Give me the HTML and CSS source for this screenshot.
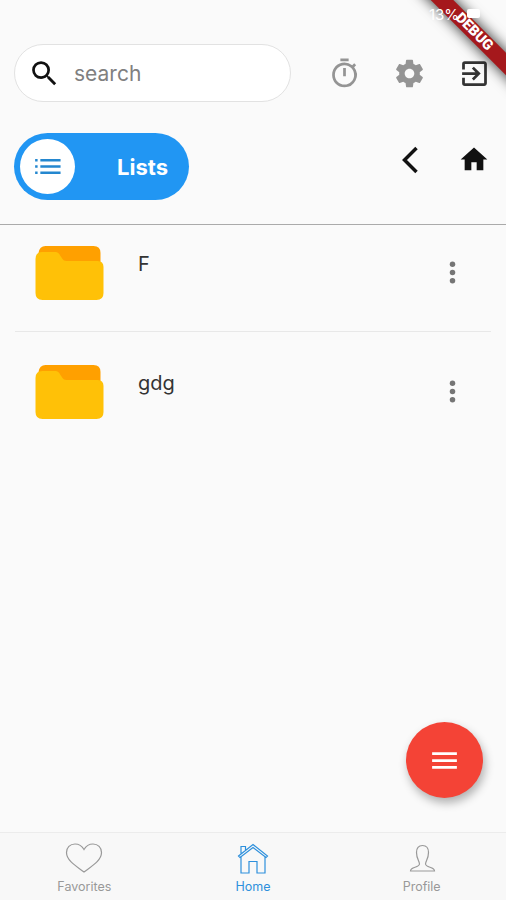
FILE: index.html
```html
<!DOCTYPE html>
<html lang="en">
<head>
  <meta charset="UTF-8">
  <title>Lists</title>
  <link rel="stylesheet" href="styles.css">
</head>
<body>
  <div class="status"><span>13%</span><i class="battery"></i></div>
  <div class="debug"><span>DEBUG</span></div>

  <header class="top">
    <div class="search">
      <svg class="icon" viewBox="0 0 24 24"><path d="M15.5 14h-.79l-.28-.27A6.471 6.471 0 0 0 16 9.5 6.5 6.5 0 1 0 9.5 16c1.61 0 3.09-.59 4.23-1.57l.27.28v.79l5 4.99L20.49 19l-4.99-5zm-6 0C7.01 14 5 11.99 5 9.5S7.01 5 9.5 5 14 7.01 14 9.5 11.99 14 9.5 14z"/></svg>
      <span>search</span>
    </div>
    <svg class="icon grey" viewBox="0 0 24 24"><path d="M15 1H9v2h6V1zm-4 13h2V8h-2v6zm8.03-6.61l1.42-1.42c-.43-.51-.9-.99-1.41-1.41l-1.42 1.42A8.962 8.962 0 0 0 12 4c-4.97 0-9 4.03-9 9s4.02 9 9 9a8.994 8.994 0 0 0 7.03-14.61zM12 20c-3.87 0-7-3.13-7-7s3.13-7 7-7 7 3.13 7 7-3.13 7-7 7z"/></svg>
    <svg class="icon grey" viewBox="0 0 24 24"><path d="M19.43 12.98c.04-.32.07-.64.07-.98s-.03-.66-.07-.98l2.11-1.65c.19-.15.24-.42.12-.64l-2-3.46c-.12-.22-.39-.3-.61-.22l-2.49 1c-.52-.4-1.08-.73-1.69-.98l-.38-2.65A.488.488 0 0 0 14 2h-4c-.25 0-.46.18-.49.42l-.38 2.65c-.61.25-1.17.59-1.69.98l-2.49-1c-.23-.09-.49 0-.61.22l-2 3.46c-.13.22-.07.49.12.64l2.11 1.65c-.04.32-.07.65-.07.98s.03.66.07.98l-2.11 1.65c-.19.15-.24.42-.12.64l2 3.46c.12.22.39.3.61.22l2.49-1c.52.4 1.08.73 1.69.98l.38 2.65c.03.24.24.42.49.42h4c.25 0 .46-.18.49-.42l.38-2.65c.61-.25 1.17-.59 1.69-.98l2.49 1c.23.09.49 0 .61-.22l2-3.46c.12-.22.07-.49-.12-.64l-2.11-1.65zM12 15.5c-1.93 0-3.5-1.57-3.5-3.5s1.57-3.5 3.5-3.5 3.5 1.57 3.5 3.5-1.57 3.5-3.5 3.5z"/></svg>
    <svg class="icon dark" viewBox="0 0 24 24"><path d="M10.09 15.59L11.5 17l5-5-5-5-1.41 1.41L12.67 11H3v2h9.67l-2.58 2.59zM19 3H5a2 2 0 0 0-2 2v4h2V5h14v14H5v-4H3v4a2 2 0 0 0 2 2h14c1.1 0 2-.9 2-2V5c0-1.1-.9-2-2-2z"/></svg>
  </header>

  <div class="bar">
    <div class="switch">
      <div class="knob">
        <svg class="icon" viewBox="0 0 24 24"><path d="M3 6.600h1.800v1.800H3zM3 11.100h1.800v1.800H3zM3 15.600h1.800v1.800H3zM6.800 6.600H21.500v1.800H6.800zM6.800 11.100H21.500v1.800H6.800zM6.800 15.600H21.500v1.800H6.800z"/></svg>
      </div>
      <b>Lists</b>
    </div>
    <svg class="chevron" viewBox="0 0 18 28"><path d="M15.5 2L3.5 14l12 12"/></svg>
    <svg class="icon house" viewBox="0 0 24 24"><path d="M10 20v-6h4v6h5v-8h3L12 3 2 12h3v8z"/></svg>
  </div>

  <main class="list">
    <div class="row">
      <svg class="folder" viewBox="0 0 68 54"><path class="back" d="M10 0h48q7 0 7 7v20H3V7q1-7 7-7z"/><path class="front" d="M7 6h13q3 0 5 4l2 3q1 2 4 2h31q6 0 6 6v26q0 7-7 7H7q-7 0-7-7V13q0-7 7-7z"/></svg>
      <span class="name">F</span>
      <svg class="icon more" viewBox="0 0 24 24"><circle cx="12" cy="6" r="2"/><circle cx="12" cy="12" r="2"/><circle cx="12" cy="18" r="2"/></svg>
    </div>
    <div class="row">
      <svg class="folder" viewBox="0 0 68 54"><path class="back" d="M10 0h48q7 0 7 7v20H3V7q1-7 7-7z"/><path class="front" d="M7 6h13q3 0 5 4l2 3q1 2 4 2h31q6 0 6 6v26q0 7-7 7H7q-7 0-7-7V13q0-7 7-7z"/></svg>
      <span class="name">gdg</span>
      <svg class="icon more" viewBox="0 0 24 24"><circle cx="12" cy="6" r="2"/><circle cx="12" cy="12" r="2"/><circle cx="12" cy="18" r="2"/></svg>
    </div>
  </main>

  <div class="fab">
    <svg class="icon" viewBox="0 0 24 24"><path d="M3 18h18v-2H3v2zm0-5h18v-2H3v2zm0-7v2h18V6H3z"/></svg>
  </div>

  <nav class="tabs">
    <div class="tab">
      <svg viewBox="0 0 40 34"><path d="M20 31C12 25 2.500 19.500 2.500 11.500c0-5 3.500-8.500 8.500-8.500 4 0 7 2 9 5.500C22 5 25 3 29 3c5 0 8.500 3.500 8.500 8.500C37.500 19.500 28 25 20 31z"/></svg>
      <span>Favorites</span>
    </div>
    <div class="tab active">
      <svg viewBox="0 0 40 34"><path d="M5.500 15L20 3.500 34.500 15l-1.500 1.500L20 6.500 7 16.500zM8 13V5.500h4.500v4M8 16v16h8V20.500h8V32h8V16"/></svg>
      <span>Home</span>
    </div>
    <div class="tab">
      <svg viewBox="0 0 40 34"><path d="M8.500 30c0-4.500 8.500-3 9-7 0-3-3-5-3-11.500C14.500 7 16.500 4.500 20.500 4.500s6 2.500 6 7c0 6.500-3 8.500-3 11.500.5 4 9 2.500 9 7z"/></svg>
      <span>Profile</span>
    </div>
  </nav>
</body>
</html>
```

FILE: styles.css
```css
* { box-sizing: border-box; }
body {
  margin: 0; height: 900px; overflow: hidden; position: relative;
  display: flex; flex-direction: column;
  background: #fafafa; color: #333; font-family: Inter, "Liberation Sans", sans-serif;
}
svg { display: block; flex: none; }
.icon { width: 33px; height: 33px; fill: #111; }
.grey { fill: #949494; }
.dark { fill: #333; }

.status {
  height: 44px; flex: none; padding: 6px 26px 0 0;
  display: flex; justify-content: flex-end; gap: 8px;
  position: relative; z-index: 1;
  color: #fff; font-size: 15px; line-height: 18px;
}
.battery { width: 13px; height: 9px; margin-top: 3px; background: #fff; border-radius: 2px; }

/* corner ribbon */
.debug {
  position: absolute; top: 0; right: 0; width: 110px; height: 110px; overflow: hidden;
  pointer-events: none;
}
.debug span {
  position: absolute; left: 8px; top: 24px; width: 140px; height: 16px;
  transform: rotate(45deg);
  background: #a5181c; color: #fff; text-align: center;
  font: 900 14.5px/16px Roboto, sans-serif;
  box-shadow: 0 0 13px 1px rgba(0, 0, 0, .75);
}

.top { display: flex; align-items: center; padding: 0 15px 0 14px; height: 58px; flex: none; }
.search {
  width: 277px; height: 58px; margin-right: 37px; padding-left: 13px;
  display: flex; align-items: center;
  background: #fff; border: 1px solid #e2e2e2; border-radius: 29px;
  color: #808080; font-size: 21px;
}
.search span { margin-left: 13px; }
.top .grey { margin-right: 32px; }

.bar {
  display: flex; align-items: flex-start; flex: none;
  height: 123px; padding: 31px 16px 0 14px; border-bottom: 1px solid #aaa;
}
.switch {
  width: 175px; height: 67px; margin-right: 212px; padding: 0 21px 0 6px;
  display: flex; align-items: center; justify-content: space-between;
  background: #2196f3; border-radius: 34px; color: #fff; font-size: 22px;
}
.knob {
  width: 55px; height: 55px; border-radius: 50%; background: #fff;
  display: flex; align-items: center; justify-content: center;
}
.knob .icon { fill: #2487cf; }
.chevron { width: 18px; height: 28px; margin-top: 13px; fill: none; stroke: #111; stroke-width: 3.5; }
.house { width: 32px; margin: 10px 0 0 39px; }

.list { flex: 1; padding: 0 15px; }
.row { display: flex; align-items: flex-start; height: 106px; padding: 21px 22px 0 20px; }
.row + .row { border-top: 1px solid #e8e8e8; padding-top: 33px; }
.folder { width: 69px; height: 54px; }
.back { fill: #ffa000; }
.front { fill: #ffc107; }
.name { flex: 1; margin-left: 34px; padding-top: 4px; font-size: 20px; line-height: 28px; }
.more { fill: #757575; margin-top: 10px; }

.fab {
  position: absolute; left: 406px; top: 722px; width: 77px; height: 76px;
  display: flex; align-items: center; justify-content: center;
  border-radius: 50%; background: #f44336; box-shadow: 2px 5px 10px rgba(0, 0, 0, .3);
}
.fab .icon { fill: #fff; }

.tabs { height: 68px; flex: none; display: flex; border-top: 1px solid #ececec; background: #f8f8f8; }
.tab { flex: 1; display: flex; flex-direction: column; align-items: center; padding-top: 8px; color: #999; font-size: 12.5px; }
.tab svg { width: 40px; height: 34px; fill: none; stroke: #999; stroke-width: 1.2; }
.tab span { margin-top: 4px; line-height: 16px; }
.tabs .active { color: #2e90dc; }
.active svg { stroke: #2e90dc; }
```
